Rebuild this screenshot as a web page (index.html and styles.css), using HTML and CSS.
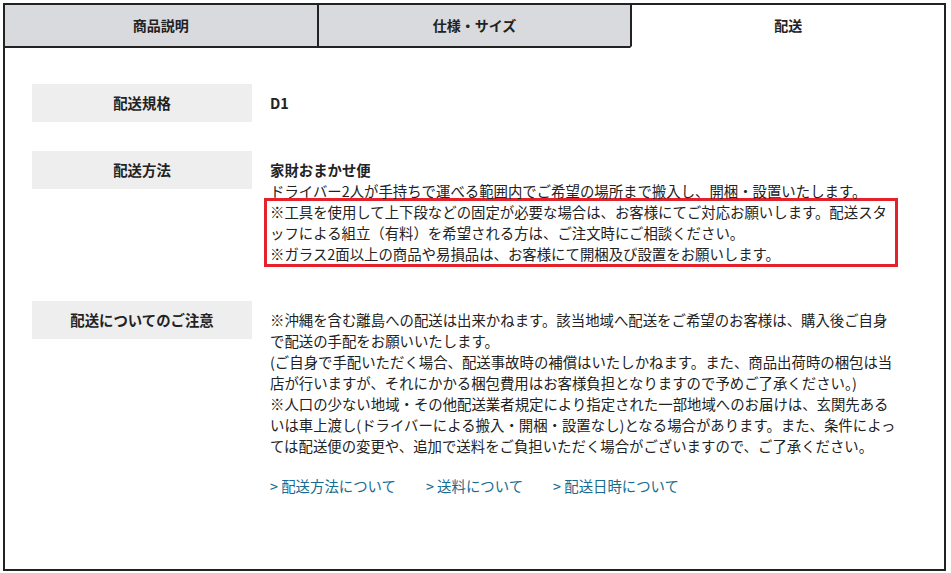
FILE: index.html
```html
<!DOCTYPE html>
<html lang="ja">
<head>
    <meta charset="UTF-8">
    <meta name="viewport" content="width=device-width, initial-scale=1.0">
    <title>配送</title>
    <link rel="stylesheet" href="styles.css">
</head>
<body>
    <div class="item-tabs">
        <ul class="tab-list">
            <li class="tab">商品説明</li>
            <li class="tab">仕様・サイズ</li>
            <li class="tab active">配送</li>
        </ul>
        <div class="tab-panel">
            <div class="spec-row">
                <div class="spec-label">配送規格</div>
                <div class="spec-value"><strong>D1</strong></div>
            </div>
            <div class="spec-row">
                <div class="spec-label">配送方法</div>
                <div class="spec-value">
                    <strong>家財おまかせ便</strong><br>
                    ドライバー2人が手持ちで運べる範囲内でご希望の場所まで搬入し、開梱・設置いたします。
                    <div class="notice">※工具を使用して上下段などの固定が必要な場合は、お客様にてご対応お願いします。配送スタッフによる組立（有料）を希望される方は、ご注文時にご相談ください。<br>※ガラス2面以上の商品や易損品は、お客様にて開梱及び設置をお願いします。</div>
                </div>
            </div>
            <div class="spec-row">
                <div class="spec-label">配送についてのご注意</div>
                <div class="spec-value">
                    ※沖縄を含む離島への配送は出来かねます。該当地域へ配送をご希望のお客様は、購入後ご自身で配送の手配をお願いいたします。<br>
                    (ご自身で手配いただく場合、配送事故時の補償はいたしかねます。また、商品出荷時の梱包は当店が行いますが、それにかかる梱包費用はお客様負担となりますので予めご了承ください。)<br>
                    ※人口の少ない地域・その他配送業者規定により指定された一部地域へのお届けは、玄関先あるいは車上渡し(ドライバーによる搬入・開梱・設置なし)となる場合があります。また、条件によっては配送便の変更や、追加で送料をご負担いただく場合がございますので、ご了承ください。
                    <div class="links">
                        <a href="#">&gt; 配送方法について</a>
                        <a href="#">&gt; 送料について</a>
                        <a href="#">&gt; 配送日時について</a>
                    </div>
                </div>
            </div>
        </div>
    </div>
</body>
</html>
```

FILE: styles.css
```css
body {
    margin: 0;
    background: #fff;
    color: #222;
    font-family: "Noto Sans CJK JP", "Noto Sans", sans-serif;
    font-size: 14.4px;
    line-height: 21px;
}
.item-tabs {
    margin: 3px 0 0 3px;
    width: 943px;
    height: 568px;
    box-sizing: border-box;
    border: 2px solid #222;
}
.tab-list {
    display: flex;
    margin: 0;
    padding: 0;
    list-style: none;
}
.tab {
    flex: 1;
    height: 41px;
    display: flex;
    align-items: center;
    justify-content: center;
    background: #d9dadd;
    border-bottom: 2px solid #222;
    font-weight: bold;
    font-size: 14px;
}
.tab + .tab {
    border-left: 2px solid #222;
}
.tab.active {
    background: #fff;
    border-bottom-color: transparent;
}
.tab-panel {
    padding: 36px 0 0 27px;
}
.spec-row {
    display: flex;
    gap: 18px;
    margin-bottom: 29px;
}
.spec-label {
    flex: 0 0 220px;
    padding: 8px 0 9px;
    align-self: flex-start;
    background: #eeeeee;
    text-align: center;
    font-weight: bold;
}
.spec-value {
    width: 630px;
    padding-top: 8px;
    padding-bottom: 8px;
}
.notice {
    width: 625px;
    margin: -3px 0 -3px -6px;
    padding-left: 3px;
    border: 3px solid #e5212b;
}
.links {
    display: flex;
    gap: 30px;
    margin-top: 19px;
}
.links a {
    color: #176b8e;
    text-decoration: none;
}
```
